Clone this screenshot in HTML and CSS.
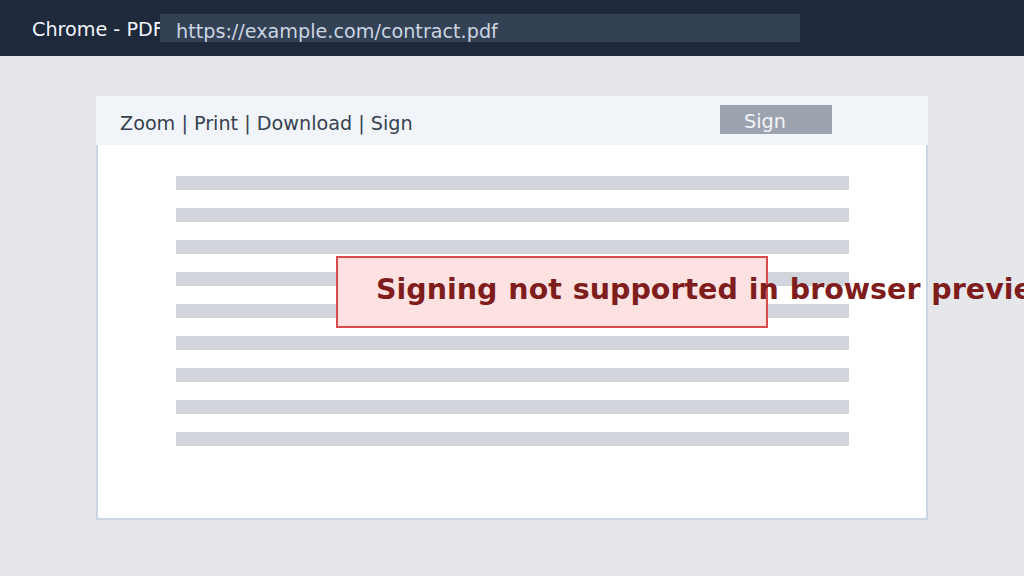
FILE: index.html
```html
<!DOCTYPE html>
<html lang="en">
<head>
    <meta charset="UTF-8">
    <meta name="viewport" content="width=device-width, initial-scale=1.0">
    <title>Chrome - PDF</title>
    <link rel="stylesheet" href="styles.css">
</head>
<body>
    <div class="topbar">
        <span class="window-title">Chrome - PDF</span>
        <div class="address">https://example.com/contract.pdf</div>
    </div>

    <div class="main">
        <div class="viewer">
            <div class="toolbar">
                <span class="tools">Zoom | Print | Download | Sign</span>
                <button class="sign-btn">Sign</button>
            </div>
            <div class="page">
                <div class="line"></div>
                <div class="line"></div>
                <div class="line"></div>
                <div class="line"></div>
                <div class="line"></div>
                <div class="line"></div>
                <div class="line"></div>
                <div class="line"></div>
                <div class="line"></div>
                <div class="notice">Signing not supported in browser preview</div>
            </div>
        </div>
    </div>
</body>
</html>
```

FILE: styles.css
```css
body {
    margin: 0;
    background-color: #e5e7eb;
    font-family: "DejaVu Sans", Verdana, sans-serif;
    overflow: hidden;
}
.topbar {
    height: 56px;
    background-color: #1e293b;
    display: flex;
    align-items: center;
    padding-left: 32px;
}
.window-title {
    width: 128px;
    overflow: hidden;
    color: #f1f5f9;
    font-size: 19.2px;
    white-space: nowrap;
    padding-top: 2px;
}
.address {
    width: 624px;
    height: 28px;
    padding-left: 16px;
    background-color: #334155;
    color: #cbd5e1;
    font-size: 19.2px;
    line-height: 36px;
    white-space: nowrap;
}
.main {
    padding: 40px 96px 0;
}
.viewer {
    width: 832px;
}
.toolbar {
    height: 49px;
    background-color: #f1f5f9;
    display: flex;
    align-items: center;
    padding: 0 24px;
}
.tools {
    color: #374151;
    font-size: 19.2px;
    padding-top: 6px;
}
.sign-btn {
    margin-left: auto;
    margin-right: 72px;
    width: 112px;
    height: 29px;
    border: none;
    background-color: #9ca3af;
    color: #f3f4f6;
    font-family: inherit;
    font-size: 19.2px;
    text-align: left;
    padding: 4px 0 0 24px;
    margin-bottom: 2px;
}
.page {
    position: relative;
    height: 342px;
    background-color: #ffffff;
    border: 2px solid #cbd5e1;
    border-top: none;
    padding: 31px 0 0 78px;
    display: flex;
    flex-direction: column;
    gap: 18px;
}
.line {
    width: 673px;
    height: 14px;
    background-color: #d1d5db;
}
.notice {
    position: absolute;
    left: 238px;
    top: 111px;
    width: 390px;
    height: 68px;
    padding-left: 38px;
    background-color: #fee2e2;
    border: 2px solid #dc4c4c;
    color: #7f1d1d;
    font-size: 28.5px;
    font-weight: bold;
    word-spacing: 1px;
    line-height: 64px;
    white-space: nowrap;
}
```
